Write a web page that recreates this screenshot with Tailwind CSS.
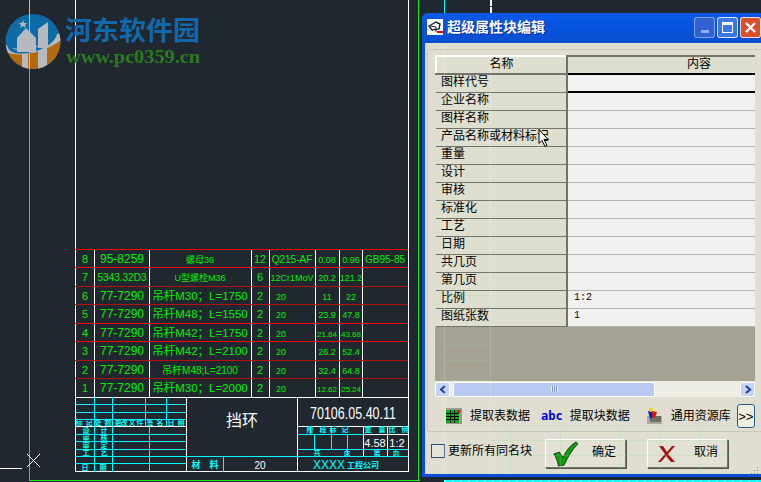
<!DOCTYPE html>
<html lang="zh">
<head>
  <meta charset="UTF-8" />
  <title>超级属性块编辑</title>
  <script src="https://cdn.jsdelivr.net/npm/@tailwindcss/browser@4"></script>
</head>
<body class="bg-[#20272f] overflow-hidden">
<div class="relative w-[761px] h-[482px] overflow-hidden bg-[#20272f] font-['Liberation_Sans','Noto_Sans_CJK_SC',sans-serif]">

  <!-- cad drawing -->
  <svg class="absolute left-0 top-0" width="761" height="482" shape-rendering="crispEdges" font-family="'Liberation Sans','Noto Sans CJK SC',sans-serif">
    <g stroke="#22e622" fill="none">
      <path d="M29.5 0V480.5H420M418.5 0V480"/>
    </g>
    <g stroke="#fff" fill="none">
      <path d="M75.5 0V471.5H408.5V0"/>
      <path d="M94.5 250V397M149.5 250V397M251.5 250V397M269.5 250V397M315.5 250V397M339.5 250V397M362.5 250V397"/>
      <path d="M75 397.5H408M75 426.5H186M297 426.5H408M186.5 397V472M297.5 397V472"/>
      <path d="M0 468.5H22" />
      <path d="M27 454L40 467M40 454L27 467" shape-rendering="auto"/>
      <path d="M363.5 426V456M387.5 426V456M363 434.5H408M363 449.5H408" />
      <path d="M490.5 0V13" stroke-width="2" stroke-dasharray="6 1"/>
    </g>
    <g stroke="#ff0000" fill="none">
      <path d="M75 249.5H408M75 267.5H408M75 323.5H408M75 341.5H408"/>
      <path d="M75 286.5H408M75 304.5H408M75 360.5H408M75 378.5H408" stroke="#b50f0f"/>
    </g>
    <g stroke="#00ffff" fill="none">
      <path d="M94.5 397V472M112.5 397V472M145.5 397V426M166.5 397V426M149.5 426V472"/>
      <path d="M75 404.5H186M75 412.5H186M75 419.5H186M75 434.5H186M75 441.5H186M75 449.5H186M75 456.5H186M75 463.5H186"/>
      <path d="M186 456.5H408M223.5 456V472M297 434.5H363M297 449.5H408M297 456.5H408"/>
      <path d="M314.5 434V449M331.5 434V449M347.5 434V456M310.5 426V434M331.5 426V434"/>
      <path d="M444.5 0V13"/>
      <path d="M444 480.5H761" stroke-width="2"/>
    </g>
    <path d="M444 480.5H761" stroke="#fff" stroke-dasharray="2 6" opacity=".7"/>

    <!-- parts table -->
    <g fill="#00f000" font-size="11" text-anchor="middle">
      <text x="85" y="263">8</text><text x="122" y="263" font-size="12">95-8259</text><text x="200" y="263" font-size="9">螺母36</text><text x="260" y="263">12</text><text x="292" y="263" font-size="10">Q215-AF</text><text x="327" y="263" font-size="9">0.08</text><text x="351" y="263" font-size="9">0.96</text><text x="385" y="263" font-size="10">GB95-85</text>
      <text x="85" y="281">7</text><text x="122" y="281" font-size="10">5343.32D3</text><text x="200" y="281" font-size="9">U型螺栓M36</text><text x="260" y="281">6</text><text x="292" y="281" font-size="9">12Cr1MoV</text><text x="327" y="281" font-size="9">20.2</text><text x="351" y="281" font-size="9">121.2</text>
      <text x="85" y="300">6</text><text x="122" y="300" font-size="12">77-7290</text><text x="200" y="300" font-size="11.5">吊杆M30；L=1750</text><text x="260" y="300">2</text><text x="281" y="300" font-size="9">20</text><text x="327" y="300" font-size="9">11</text><text x="351" y="300" font-size="9">22</text>
      <text x="85" y="318">5</text><text x="122" y="318" font-size="12">77-7290</text><text x="200" y="318" font-size="11.5">吊杆M48；L=1550</text><text x="260" y="318">2</text><text x="281" y="318" font-size="9">20</text><text x="327" y="318" font-size="9">23.9</text><text x="351" y="318" font-size="9">47.8</text>
      <text x="85" y="337">4</text><text x="122" y="337" font-size="12">77-7290</text><text x="200" y="337" font-size="11.5">吊杆M42；L=1750</text><text x="260" y="337">2</text><text x="281" y="337" font-size="9">20</text><text x="327" y="337" font-size="8">21.84</text><text x="351" y="337" font-size="8">43.68</text>
      <text x="85" y="355">3</text><text x="122" y="355" font-size="12">77-7290</text><text x="200" y="355" font-size="11.5">吊杆M42；L=2100</text><text x="260" y="355">2</text><text x="281" y="355" font-size="9">20</text><text x="327" y="355" font-size="9">26.2</text><text x="351" y="355" font-size="9">52.4</text>
      <text x="85" y="374">2</text><text x="122" y="374" font-size="12">77-7290</text><text x="200" y="374" font-size="10">吊杆M48;L=2100</text><text x="260" y="374">2</text><text x="281" y="374" font-size="9">20</text><text x="327" y="374" font-size="9">32.4</text><text x="351" y="374" font-size="9">64.8</text>
      <text x="85" y="392">1</text><text x="122" y="392" font-size="12">77-7290</text><text x="200" y="392" font-size="11.5">吊杆M30；L=2000</text><text x="260" y="392">2</text><text x="281" y="392" font-size="9">20</text><text x="327" y="392" font-size="8">12.62</text><text x="351" y="392" font-size="8">25.24</text>
    </g>

    <!-- title block -->
    <g fill="#fff" text-anchor="middle">
      <text x="242" y="426" font-size="16">挡环</text>
      <text x="353" y="419" font-size="17" textLength="86" lengthAdjust="spacingAndGlyphs">70106.05.40.11</text>
      <text x="260" y="469" font-size="10">20</text>
      <text x="375" y="447" font-size="11">4.58</text>
      <text x="397" y="447" font-size="11">1:2</text>
    </g>
    <g fill="#00ffff" text-anchor="middle" font-size="7" font-weight="700">
      <text x="79" y="425">标</text><text x="89" y="425">记</text><text x="98" y="425">处</text><text x="108" y="425">数</text><text x="118" y="425">更</text><text x="124" y="425">改</text><text x="132" y="425">文</text><text x="140" y="425">件</text><text x="150" y="425">签</text><text x="160" y="425">名</text><text x="171" y="425">日</text><text x="181" y="425">期</text>
      <text x="86" y="433">设</text><text x="104" y="433">计</text><text x="86" y="440">审</text><text x="104" y="440">核</text><text x="86" y="448">审</text><text x="104" y="448">定</text><text x="86" y="455">工</text><text x="104" y="455">艺</text><text x="85" y="470">日</text><text x="103" y="470">期</text>
      <text x="310" y="432">阶</text><text x="323" y="432">段</text><text x="333" y="432">标</text><text x="345" y="432">记</text><text x="368" y="432">重</text><text x="382" y="432">量</text><text x="392" y="432">比</text><text x="405" y="432">例</text>
      <text x="317" y="455">共</text><text x="347" y="455">页</text><text x="377" y="455">第</text><text x="396" y="455">页</text>
      <text x="196" y="468" font-size="9">材</text><text x="214" y="468" font-size="9">料</text>
      <text x="329" y="469" font-size="12" font-weight="400">XXXX</text><text x="347" y="468" font-size="8" text-anchor="start">工程公司</text>
    </g>

    <!-- watermark logo -->
    <defs><clipPath id="logoClip"><circle cx="33" cy="41.5" r="27.5"/></clipPath></defs>
    <g clip-path="url(#logoClip)" shape-rendering="auto">
      <rect x="0" y="10" width="70" height="60" fill="#0f6ba6"/>
      <path d="M0 48C20 60 45 52 66 30V72H0Z" fill="#b5690f"/>
      <path d="M0 40C14 56 44 50 66 26V36C48 52 20 60 0 50Z" fill="#b5bac0"/>
      <path d="M22 50H28V70H22ZM38 46H47V70H38Z" fill="#b5bac0"/>
      <ellipse cx="32" cy="39" rx="24" ry="11" transform="rotate(-18 32 39)" fill="none" stroke="#0f6ba6" stroke-width="3.5"/>
      <path d="M26 28L36 38V52H17V38Z" fill="#b5bac0"/>
      <path d="M38 29L48 22V48H38Z" fill="#b5bac0"/>
      <path d="M23 20l1 3 3 0-2 2 1 3-3-2-3 2 1-3-2-2 3 0z" fill="#b5bac0"/>
    </g>
    <path d="M29.5 0V70" stroke="#6cf26c"/>
    <text x="65" y="40" font-size="26" font-weight="700" fill="#1069ad" font-family="'Noto Sans CJK SC',sans-serif" textLength="135" lengthAdjust="spacingAndGlyphs">河东软件园</text>
    <text x="66" y="63" font-size="18" font-weight="700" fill="#2a7a1f" font-family="'Liberation Serif',serif" textLength="134" lengthAdjust="spacingAndGlyphs">www.pc0359.cn</text>
  </svg>

  <!-- dialog -->
  <div class="absolute left-[422px] top-[13px] w-[345px] h-[464px] bg-[#0a4ee0] rounded-t-[6px] flex flex-col">
    <div class="h-[30px] shrink-0 flex items-center pl-[5px] pb-[2px] bg-linear-to-b from-[#0a5ae8] via-[#0553dd] to-[#0a4fd0] rounded-t-[6px]">
      <svg width="16" height="16" viewBox="0 0 16 16" class="mr-[4px]"><rect width="16" height="16" fill="#fff"/><path d="M2 7l7-4 4 2-1 5-7 1z" fill="none" stroke="#223" stroke-width="1.4"/><path d="M3 7l6 1v5" fill="none" stroke="#223"/><rect x="10" y="12" width="6" height="2" fill="#e00"/></svg>
      <span class="text-[14px] leading-none font-bold text-white [text-shadow:1px_1px_0_#0a2a90]">超级属性块编辑</span>
      <div class="ml-auto flex gap-[2px] mr-[6px] mt-[1px]">
        <div class="w-[21px] h-[21px] rounded-[3px] border border-white/40 bg-[#2f63d4] flex items-end justify-center pb-[4px]"><div class="w-[8px] h-[3px] bg-white/50"></div></div>
        <div class="w-[21px] h-[21px] rounded-[3px] border border-white/80 bg-[#3d77e0] flex items-center justify-center"><div class="w-[11px] h-[11px] border border-white border-t-[3px]"></div></div>
        <div class="w-[21px] h-[21px] rounded-[3px] border border-white/80 bg-[#d9502e] flex items-center justify-center">
          <svg width="13" height="13" viewBox="0 0 13 13"><path d="M2 2l9 9M11 2l-9 9" stroke="#fff" stroke-width="2.4"/></svg>
        </div>
      </div>
    </div>

    <div class="flex-1 mx-[3px] mb-[3px] bg-[#dfded0] flex flex-col relative">
      <!-- group box -->
      <div class="mx-[2px] mt-[6px] h-[383px] w-[345px] border border-[#c8c8b8] rounded-[3px] pl-[7px] pt-[5px] flex flex-col shrink-0">
        <div class="w-[320px] overflow-hidden shrink-0">
          <table class="w-[322px] table-fixed border-collapse text-[12px] leading-none text-black">
            <colgroup><col class="w-[131px]"><col class="w-[191px]"></colgroup>
            <thead>
              <tr class="h-[18px]">
                <th class="font-normal align-top pt-[1px] bg-[#dfdfd0] border-2 border-[#74736a] border-l-[#fff] border-t-[#fff]">名称</th>
                <th class="font-normal align-top pt-[1px] pl-[119px] text-left whitespace-nowrap bg-[#dfdfd0] border-t-2 border-[#74736a]">内容</th>
              </tr>
            </thead>
            <tbody id="rows"></tbody>
          </table>
        </div>
        <div class="w-[320px] flex-1 bg-[#a5a294]"></div>
        <div class="w-[320px] h-[16px] bg-[#edede3] flex items-center">
          <div class="w-[15px] h-[15px] rounded-[2px] bg-[#c5d3f5] border border-white text-[#1f3f9a] flex items-center justify-center"><svg width="8" height="9"><path d="M6 1L2 4.5 6 8" fill="none" stroke="currentColor" stroke-width="2"/></svg></div>
          <div class="ml-[3px] w-[202px] h-[15px] rounded-[2px] bg-[#b8c9f2] border border-white flex items-center justify-center"><div class="w-[7px] h-[6px] bg-[repeating-linear-gradient(90deg,#eef2ff_0_1px,#7f96d8_1px_2px)]"></div></div>
          <div class="flex-1"></div>
          <div class="w-[15px] h-[15px] rounded-[2px] bg-[#c5d3f5] border border-white text-[#1f3f9a] flex items-center justify-center"><svg width="8" height="9"><path d="M2 1l4 3.5L2 8" fill="none" stroke="currentColor" stroke-width="2"/></svg></div>
        </div>
        <!-- toolbar -->
        <div class="flex items-center h-[30px] mt-[4px] text-[12px] leading-none text-black">
          <svg width="16" height="16" viewBox="0 0 16 16" class="ml-[11px] mr-[8px]"><rect width="16" height="16" fill="#9a9a92"/><rect x="0" y="2" width="13" height="13" fill="#00b400"/><path d="M0 5.5H13M0 8.5H13M0 11.5H13M4.5 2V15M8.5 2V15" stroke="#000"/><path d="M11 3l4-1-2 4z" fill="#e00"/></svg>
          <span>提取表数据</span>
          <span class="ml-[11px] mr-[7px] text-[#0000e0] font-bold text-[12px] font-['DejaVu_Sans_Mono',monospace]">abc</span>
          <span>提取块数据</span>
          <svg width="17" height="17" viewBox="0 0 17 17" class="ml-[16px] mr-[8px]"><rect x="1" y="8" width="15" height="8" fill="#a9a9a0"/><path d="M4 9h11M4 11h11M4 13h11" stroke="#333"/><path d="M2 3h5v6l-3 2z" fill="#0a1fbf"/><path d="M6 3l5 1-2 6-3-1z" fill="#d81818"/><circle cx="5" cy="2" r="2" fill="#f2d20a"/></svg>
          <span>通用资源库</span>
          <div class="ml-[6px] w-[18px] h-[24px] rounded-[3px] border border-[#2b5a8f] bg-[#eeeee2] flex items-center justify-center font-['Liberation_Sans',sans-serif] font-light text-[13px] leading-none">&gt;&gt;</div>
        </div>
      </div>

      <!-- footer -->
      <div class="flex items-center h-[38px] pl-[6px] text-[12px] leading-none text-black">
        <div class="w-[14px] h-[14px] border border-[#2f4f7f] bg-[#e4e4da]"></div>
        <span class="ml-[3px]">更新所有同名块</span>
        <button class="ml-[13px] mt-[5px] w-[81px] h-[29px] bg-[#e2e1d4] border border-t-white border-l-white border-r-[#77766c] border-b-[#77766c] shadow-[1px_1px_0_#55554c] flex items-center">
          <svg width="26" height="27" viewBox="0 0 28 27" class="ml-[6px]"><path d="M2 14l6-2 4 6C15 11 19 5 26 1l2 2C22 9 17 17 13 26l-6 1C6 21 4 17 2 14z" fill="#149a14" stroke="#063f06" stroke-width="1"/></svg>
          <span class="ml-[14px] -mt-[3px]">确定</span>
        </button>
        <button class="ml-[21px] mt-[5px] w-[81px] h-[29px] bg-[#e2e1d4] border border-t-white border-l-white border-r-[#77766c] border-b-[#77766c] shadow-[1px_1px_0_#55554c] flex items-center">
          <svg width="18" height="18" viewBox="0 0 18 18" class="ml-[10px]"><path d="M1 1h4l4 6 5-6h3l-7 8 7 8h-4l-5-6-5 6H0l7-8z" fill="#a50f0f"/></svg>
          <span class="ml-[18px] -mt-[3px]">取消</span>
        </button>
      </div>
    </div>
  </div>

  <!-- drawing showing faintly through the translucent dialog -->
  <svg class="absolute left-0 top-0 pointer-events-none" width="761" height="482" shape-rendering="crispEdges" fill="none">
    <g stroke="#fff" opacity=".18">
      <path d="M444.5 43V474M490.5 43V474"/>
    </g>
    <g stroke="#8fe08f" opacity=".22">
      <path d="M444 295H490M444 310H490M444 345H490M444 360H490M444 380H490"/>
      <path d="M490 426H740M490 440H740M490 455H740M510 426V474M560 426V474M620 426V474M660 426V474M700 426V474"/>
    </g>
    <path d="M757 467v1M754 470v1M757 470v1M751 473v1M754 473v1M757 473v1" stroke="#888"/>
  </svg>

  <!-- mouse pointer over the grid -->
  <svg class="absolute left-[538px] top-[128px]" width="14" height="21" viewBox="0 0 14 20"><path d="M1 1v14l3-3 3 6 2-1-3-6h4z" fill="#fff" stroke="#000"/></svg>
</div>

<script>
  const rows = [
    ["图样代号", ""], ["企业名称", ""], ["图样名称", ""], ["产品名称或材料标记", ""],
    ["重量", ""], ["设计", ""], ["审核", ""], ["标准化", ""], ["工艺", ""], ["日期", ""],
    ["共几页", ""], ["第几页", ""], ["比例", "1:2"], ["图纸张数", "1"]
  ];
  document.getElementById("rows").innerHTML = rows.map((r, i) => {
    const sel = i === 0;
    return `<tr class="h-[18px]">
      <td class="align-top pt-[1px] bg-[#dfdfd0] border-r-2 border-b border-[#74736a] pl-[5px] overflow-hidden whitespace-nowrap">${r[0]}</td>
      <td class="${sel ? "bg-[#f2f2f2] border-2 border-black" : "bg-[#f1f1f1] border-b border-[#b5b5ad]"} align-top pt-[2px] pl-[6px] font-['Liberation_Mono',monospace] text-[10px]">${r[1]}</td>
    </tr>`;
  }).join("");
</script>
</body>
</html>
